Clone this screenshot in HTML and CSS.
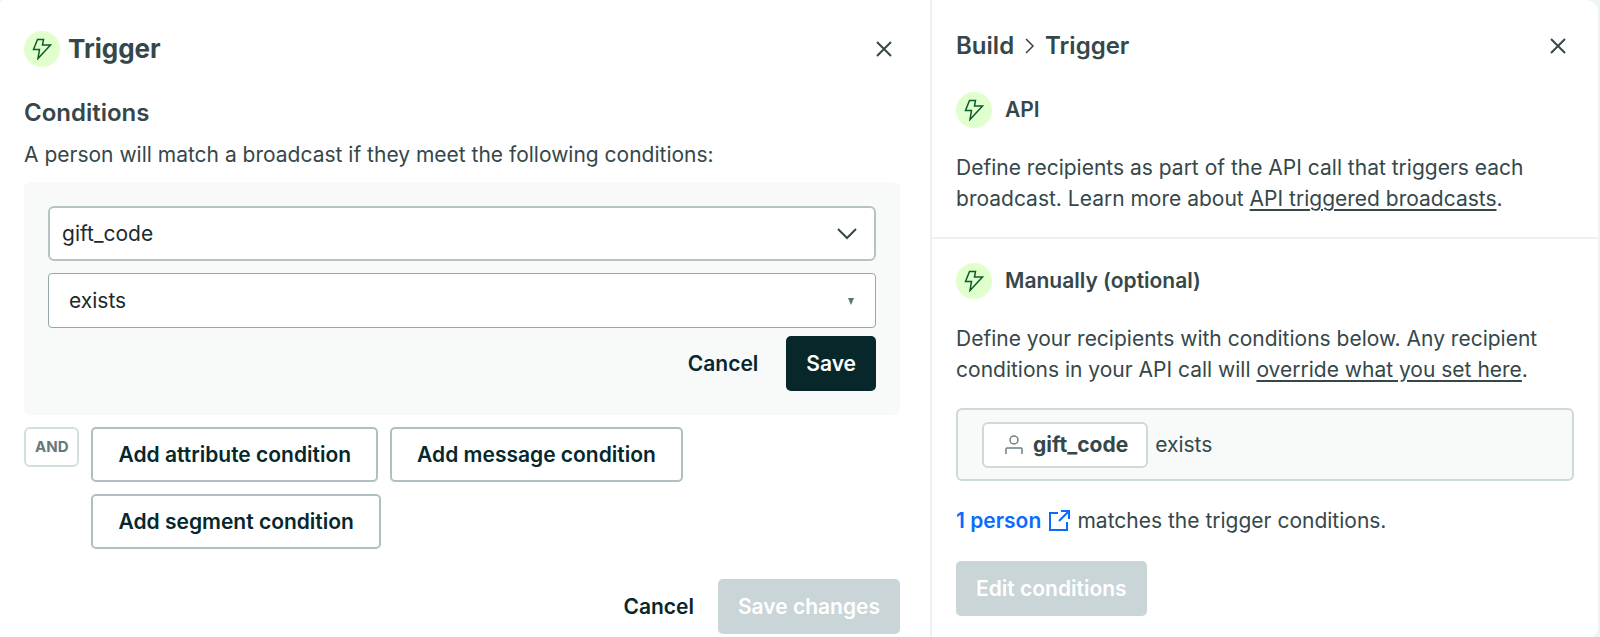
FILE: index.html
```html
<!DOCTYPE html>
<html lang="en">
<head>
  <meta charset="UTF-8" />
  <meta name="viewport" content="width=device-width, initial-scale=1.0"/>
  <title>Trigger</title>
  <link rel="stylesheet" href="styles.css">
</head>
<body>
  <div class="window">
    <main class="editor">
      <header class="editor-header">
        <span class="badge">
          <svg width="20" height="22" viewBox="0 0 20 22"><path d="M5.5 1.5h6l-1 5.5h8L6 20.5l1.5-9h-6z"/></svg>
        </span>
        <h1>Trigger</h1>
        <button class="close" aria-label="Close">
          <svg width="16" height="16" viewBox="0 0 16 16"><path d="M1 1l14 14M15 1L1 15"/></svg>
        </button>
      </header>

      <h2>Conditions</h2>
      <p class="intro">A person will match a broadcast if they meet the following conditions:</p>

      <form class="condition">
        <div class="select-box">
          <select class="attribute" aria-label="Attribute">
            <option>gift_code</option>
          </select>
          <svg class="chevron" width="20" height="12" viewBox="0 0 20 12"><path d="M1 1l9 9 9-9"/></svg>
        </div>
        <div class="select-box">
          <select class="operator" aria-label="Operator">
            <option>exists</option>
          </select>
          <svg class="caret" width="6" height="7" viewBox="0 0 6 7"><path d="M0 0h6L3 7z"/></svg>
        </div>
        <div class="actions">
          <button type="button" class="btn btn-text">Cancel</button>
          <button type="button" class="btn btn-primary">Save</button>
        </div>
      </form>

      <div class="add-row">
        <span class="and">AND</span>
        <div class="add-buttons">
          <button class="btn btn-outline">Add attribute condition</button>
          <button class="btn btn-outline">Add message condition</button>
          <button class="btn btn-outline">Add segment condition</button>
        </div>
      </div>

      <footer class="actions">
        <button class="btn btn-text">Cancel</button>
        <button class="btn btn-disabled" disabled>Save changes</button>
      </footer>
    </main>

    <aside class="sidebar">
      <section class="panel">
        <header class="sidebar-header">
          <nav class="breadcrumb">
            <span>Build</span>
            <svg width="11" height="16" viewBox="0 0 11 16"><path d="M2 1l7 7-7 7"/></svg>
            <span>Trigger</span>
          </nav>
          <button class="close" aria-label="Close">
            <svg width="16" height="16" viewBox="0 0 16 16"><path d="M1 1l14 14M15 1L1 15"/></svg>
          </button>
        </header>
        <div class="panel-title">
          <span class="badge">
            <svg width="20" height="22" viewBox="0 0 20 22"><path d="M5.5 1.5h6l-1 5.5h8L6 20.5l1.5-9h-6z"/></svg>
          </span>
          <h3>API</h3>
        </div>
        <p>Define recipients as part of the API call that triggers each broadcast. Learn more about <a href="#">API triggered broadcasts</a>.</p>
      </section>

      <section class="panel">
        <div class="panel-title">
          <span class="badge">
            <svg width="20" height="22" viewBox="0 0 20 22"><path d="M5.5 1.5h6l-1 5.5h8L6 20.5l1.5-9h-6z"/></svg>
          </span>
          <h3>Manually (optional)</h3>
        </div>
        <p>Define your recipients with conditions below. Any recipient conditions in your API call will <a href="#">override what you set here</a>.</p>
        <div class="summary">
          <span class="chip">
            <svg width="18" height="20" viewBox="0 0 18 20"><circle cx="9" cy="5" r="4"/><path d="M1 19v-5q0-1 1-1h14q1 0 1 1v5"/></svg>
            gift_code
          </span>
          <span>exists</span>
        </div>
        <p class="matches">
          <a class="people" href="#">1 person
            <svg width="21" height="21" viewBox="0 0 21 21"><path d="M9 3H1v17h17v-8M12 1h8v8M20 1L10 11"/></svg></a>
          matches the trigger conditions.
        </p>
        <button class="btn btn-disabled" disabled>Edit conditions</button>
      </section>
    </aside>
  </div>
</body>
</html>
```
FILE: styles.css
```css
* {
  box-sizing: border-box;
}
body {
  margin: 0;
  background: #eef3f3;
  color: #36474a;
  font-family: Inter, "Liberation Sans", sans-serif;
  font-size: 21px;
  line-height: 30px;
}
h1, h2, h3, p {
  margin: 0;
}
h1 {
  font-size: 26px;
  font-weight: 700;
}
h2 {
  font-size: 24px;
  font-weight: 600;
}
h3 {
  font-size: 21px;
  font-weight: 600;
}
a {
  color: inherit;
  text-underline-offset: 3px;
}
button, select {
  font: inherit;
  cursor: pointer;
}
svg {
  fill: none;
  stroke: currentColor;
  stroke-width: 2;
  flex-shrink: 0;
}
.window {
  display: flex;
  min-height: 100vh;
  margin-right: 2px;
  background: #fff;
  border-radius: 4px 12px 12px 0;
}
.editor {
  flex: 1;
  padding: 31px 30px 0 24px;
}
.editor-header, .sidebar-header {
  display: flex;
  align-items: center;
}
.editor-header {
  height: 36px;
  gap: 8px;
  margin-bottom: 31px;
}
.close {
  display: flex;
  margin-left: auto;
  padding: 8px;
  border: none;
  background: none;
  color: #36474a;
}
.badge {
  display: flex;
  align-items: center;
  justify-content: center;
  width: 36px;
  height: 36px;
  border-radius: 50%;
  background: #e1ffcc;
  color: #0a5c2a;
}
.badge svg {
  stroke-width: 1.5;
}
.intro {
  margin: 12px 0;
  line-height: 30px;
}
.condition {
  display: grid;
  gap: 12px;
  margin-bottom: 12px;
  padding: 24px;
  border-radius: 6px;
  background: #f8faf9;
}
.select-box {
  position: relative;
}
.select-box select {
  display: block;
  width: 100%;
  height: 55px;
  padding: 0 12px;
  border: 2px solid #b5c3c5;
  border-radius: 6px;
  background: #fff;
  color: #1b2b2e;
  appearance: none;
}
.select-box .operator {
  padding: 0 20px;
  border: 1px solid #93a8aa;
  border-radius: 4px;
}
.chevron, .caret {
  position: absolute;
  top: 22px;
  right: 19px;
  pointer-events: none;
}
.caret {
  top: 25px;
  right: 22px;
  fill: #5f7376;
  stroke: none;
}
.actions {
  display: flex;
  justify-content: flex-end;
  gap: 4px;
}
.condition .actions {
  gap: 8px;
  margin-top: -4px;
}
.btn {
  height: 55px;
  padding: 0 20px;
  border: none;
  border-radius: 5px;
  background: none;
  color: #06282d;
  font-weight: 600;
}
.btn-primary {
  background: #08272b;
  color: #fff;
}
.btn-outline {
  padding: 0 25px;
  border: 2px solid #b0bfc1;
  background: #fff;
}
.btn-disabled {
  background: #cad5d7;
  color: #fff;
  cursor: default;
}
.add-row {
  display: flex;
  align-items: flex-start;
  gap: 12px;
  margin-bottom: 30px;
}
.and {
  padding: 3px 9px;
  border: 2px solid #d3dedf;
  border-radius: 6px;
  color: #66797b;
  font-size: 15px;
  font-weight: 700;
}
.add-buttons {
  display: flex;
  flex-wrap: wrap;
  gap: 12px;
}
.sidebar {
  width: 41.8%;
  border-left: 2px solid #ecf0f0;
}
.panel {
  padding: 24px 24px 23px;
}
.panel + .panel {
  border-top: 2px solid #ecf0f0;
}
.panel p {
  line-height: 31px;
}
.sidebar-header {
  height: 44px;
  margin-bottom: 24px;
}
.breadcrumb {
  display: flex;
  align-items: center;
  gap: 10px;
  font-size: 24px;
  font-weight: 600;
}
.breadcrumb svg {
  stroke-width: 1.5;
}
.panel-title {
  display: flex;
  align-items: center;
  gap: 13px;
  margin-bottom: 24px;
}
.summary {
  display: flex;
  align-items: center;
  gap: 7px;
  height: 73px;
  margin: 23px 0 24px;
  padding: 0 24px;
  border: 2px solid #cdd9da;
  border-radius: 6px;
  background: #f8faf9;
}
.chip {
  display: flex;
  align-items: center;
  gap: 10px;
  height: 46px;
  padding: 0 18px 0 21px;
  border: 2px solid #cdd9da;
  border-radius: 6px;
  background: #fff;
  font-weight: 700;
}
.chip svg {
  color: #6c7f82;
  stroke-width: 1.5;
}
.matches {
  margin-bottom: 25px;
}
.people {
  color: #0a6cff;
  font-weight: 600;
  text-decoration: none;
}
.people svg {
  margin: 0 2px;
  vertical-align: -3px;
}
```
